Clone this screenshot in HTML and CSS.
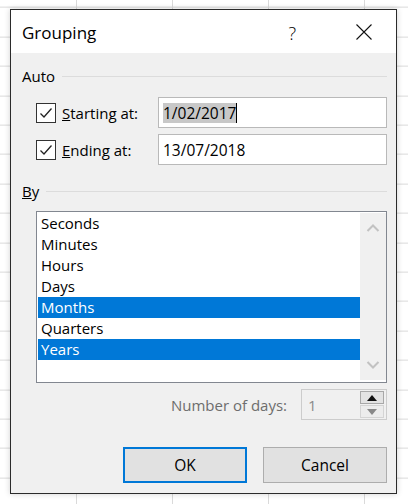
FILE: index.html
```html
<!DOCTYPE html>
<html>
<head>
<meta charset="utf-8">
<link rel="stylesheet" href="styles.css">
</head>
<body>
<div class="dialog">
  <div class="titlebar">
    <span class="title">Grouping</span>
    <span class="help">?</span>
    <svg class="close" width="16" height="16" viewBox="0 0 16 16"><path d="M0.5 0.5L15.5 15.5M15.5 0.5L0.5 15.5" stroke="#111" stroke-width="1.1" fill="none"/></svg>
  </div>
  <div class="content">
    <div class="group-head head-auto"><span>Auto</span><div class="rule"></div></div>
    <div class="auto-rows">
      <div class="row">
        <span class="check"><svg width="20" height="20" viewBox="0 0 20 20"><path d="M4.5 10.5L8 14L15.5 5.5" stroke="#222" stroke-width="1.3" fill="none"/></svg></span>
        <span class="label"><u>S</u>tarting at:</span>
        <div class="textbox"><span class="sel">1/02/2017</span><span class="caret"></span></div>
      </div>
      <div class="row">
        <span class="check"><svg width="20" height="20" viewBox="0 0 20 20"><path d="M4.5 10.5L8 14L15.5 5.5" stroke="#222" stroke-width="1.3" fill="none"/></svg></span>
        <span class="label"><u>E</u>nding at:</span>
        <div class="textbox"><span>13/07/2018</span></div>
      </div>
    </div>
    <div class="group-head head-by"><span><u>B</u>y</span><div class="rule"></div></div>
    <div class="listbox">
      <div class="items">
        <div class="item">Seconds</div>
        <div class="item">Minutes</div>
        <div class="item">Hours</div>
        <div class="item">Days</div>
        <div class="item selected">Months</div>
        <div class="item">Quarters</div>
        <div class="item selected">Years</div>
      </div>
      <div class="scrollbar">
        <svg width="14" height="10" viewBox="0 0 14 10"><path d="M1.5 8L7 2.5L12.5 8" stroke="#c2c2c2" stroke-width="2" fill="none"/></svg>
        <svg width="14" height="10" viewBox="0 0 14 10"><path d="M1.5 2L7 7.5L12.5 2" stroke="#c2c2c2" stroke-width="2" fill="none"/></svg>
      </div>
    </div>
    <div class="days-row">
      <span class="days-label">Number of days:</span>
      <div class="spinner">
        <span class="spin-value">1</span>
        <div class="spin-buttons">
          <div class="spin-btn up"><svg width="10" height="6" viewBox="0 0 10 6"><path d="M0 6L5 0L10 6Z" fill="#111"/></svg></div>
          <div class="spin-btn down"><svg width="10" height="6" viewBox="0 0 10 6"><path d="M0 0L5 6L10 0Z" fill="#888"/></svg></div>
        </div>
      </div>
    </div>
    <div class="buttons">
      <button class="btn ok">OK</button>
      <button class="btn">Cancel</button>
    </div>
  </div>
</div>
</body>
</html>
```

FILE: styles.css
```css
html, body {
  margin: 0;
  padding: 0;
}
body {
  width: 408px;
  height: 504px;
  overflow: hidden;
  background-color: #fff;
  background-image:
    repeating-linear-gradient(to right, transparent 0 95px, #dadada 95px 96px),
    repeating-linear-gradient(to bottom, transparent 0 28.4px, #dadada 28.4px 29.4px);
  background-position: -19px 0, 0 -21.4px;
  font-family: "Open Sans", "Noto Sans", sans-serif;
  font-size: 15px;
  color: #000;
  padding-top: 9px;
  padding-left: 10px;
  box-sizing: border-box;
}
.dialog {
  width: 387px;
  height: 485px;
  box-sizing: border-box;
  border: 1px solid #2b2b2b;
  background: #f0f0f0;
  box-shadow: 0 0 6px rgba(0, 0, 0, 0.18);
  display: flex;
  flex-direction: column;
}
.titlebar {
  height: 43px;
  background: #fff;
  display: flex;
  align-items: center;
  padding-left: 11px;
  padding-right: 24px;
  padding-top: 2px;
  box-sizing: border-box;
}
.title {
  font-size: 17px;
  flex: 1;
}
.help {
  font-size: 18px;
  font-weight: 300;
  margin-right: 60px;
}
.close {
  width: 16px;
  height: 16px;
  margin-top: -1px;
}
.content {
  flex: 1;
  padding: 0 9px 0 11px;
  display: flex;
  flex-direction: column;
}
.group-head {
  display: flex;
  align-items: center;
  height: 18px;
}
.group-head .rule {
  flex: 1;
  height: 1px;
  background: #dcdcdc;
  margin-left: 7px;
}
.head-auto {
  margin-top: 14px;
}
.head-by {
  margin-top: 17px;
}
.auto-rows {
  padding-left: 14px;
  margin-top: 12px;
  display: flex;
  flex-direction: column;
  gap: 6px;
}
.row {
  display: flex;
  align-items: center;
  height: 31px;
}
.check {
  width: 20px;
  height: 20px;
  box-sizing: border-box;
  border: 1px solid #333;
  background: #fff;
  display: flex;
  align-items: center;
  justify-content: center;
}
.check svg {
  display: block;
  margin: -1px;
}
.label {
  margin-left: 6px;
  width: 96px;
}
.textbox {
  width: 229px;
  height: 31px;
  box-sizing: border-box;
  border: 1px solid #b9b9b9;
  background: #fff;
  display: flex;
  align-items: center;
  padding-left: 4px;
  font-size: 15.5px;
}
.sel {
  background: #c8c8c8;
  line-height: 20px;
}
.caret {
  width: 1px;
  height: 20px;
  background: #000;
}
.listbox {
  margin-top: 11px;
  margin-left: 14px;
  width: 351px;
  height: 172px;
  box-sizing: border-box;
  border: 1px solid #828790;
  background: #fff;
  padding: 1px 0 0 1px;
  display: flex;
}
.items {
  flex: 1;
}
.item {
  height: 21px;
  line-height: 21px;
  padding-left: 3px;
  font-size: 15px;
}
.item.selected {
  background: #0078d7;
  color: #fff;
}
.scrollbar {
  width: 26px;
  background: #f0f0f0;
  display: flex;
  flex-direction: column;
  align-items: center;
  justify-content: space-between;
  padding: 10px 0 10px;
  margin-bottom: 2px;
}
.scrollbar svg {
  display: block;
}
.days-row {
  margin-top: 6px;
  display: flex;
  justify-content: flex-end;
  align-items: center;
}
.days-label {
  color: #6d6d6d;
  margin-right: 14px;
  font-size: 15px;
}
.spinner {
  width: 86px;
  height: 31px;
  box-sizing: border-box;
  border: 1px solid #cccccc;
  background: #f0f0f0;
  display: flex;
  align-items: center;
}
.spin-value {
  flex: 1;
  color: #8a8a8a;
  padding-left: 6px;
  font-size: 15px;
}
.spin-buttons {
  width: 24px;
  margin-right: 2px;
  display: flex;
  flex-direction: column;
  gap: 1px;
}
.spin-btn {
  height: 13px;
  display: flex;
  align-items: center;
  justify-content: center;
  box-sizing: border-box;
}
.spin-btn.up {
  background: #e3e3e3;
  border: 1px solid #a8a8a8;
}
.spin-btn.down {
  background: #ececec;
  border: 1px solid #d4d4d4;
}
.buttons {
  margin-top: 27px;
  display: flex;
  justify-content: flex-end;
  gap: 16px;
}
.btn {
  width: 124px;
  height: 36px;
  box-sizing: border-box;
  background: #e1e1e1;
  border: 1px solid #adadad;
  font-family: inherit;
  font-size: 15.5px;
  color: #000;
  padding: 0;
}
.btn.ok {
  border: 2px solid #0078d7;
}
```
